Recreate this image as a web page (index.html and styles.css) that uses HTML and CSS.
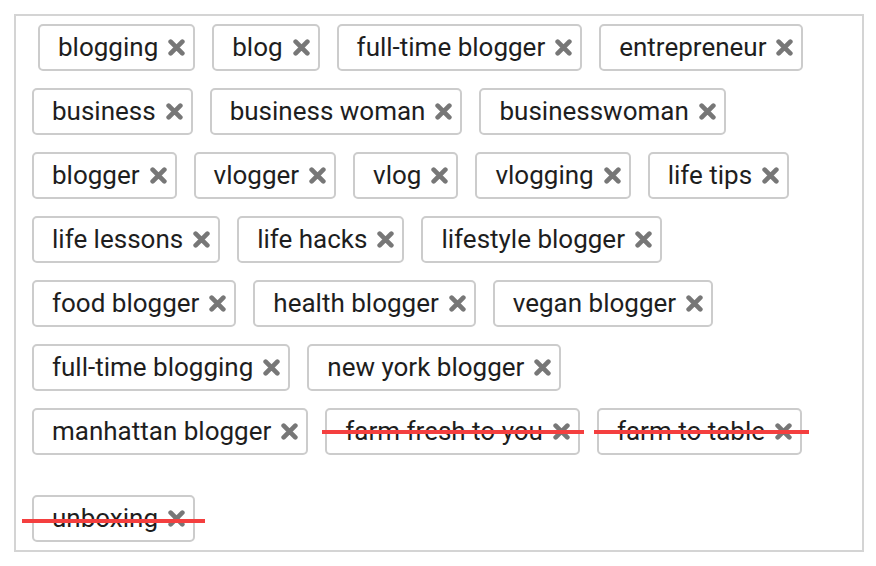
FILE: index.html
```html
<!DOCTYPE html>
<html lang="en">
<head>
<meta charset="utf-8">
<title>Tags</title>
<link rel="stylesheet" href="styles.css">
</head>
<body>
<div class="tag-box">
  <div class="tag-row first">
    <span class="tag"><span class="label">blogging</span><svg class="x" viewBox="0 0 16 16"><path d="M2.5 2.5L13.5 13.5M13.5 2.5L2.5 13.5"/></svg></span>
    <span class="tag"><span class="label">blog</span><svg class="x" viewBox="0 0 16 16"><path d="M2.5 2.5L13.5 13.5M13.5 2.5L2.5 13.5"/></svg></span>
    <span class="tag"><span class="label">full-time blogger</span><svg class="x" viewBox="0 0 16 16"><path d="M2.5 2.5L13.5 13.5M13.5 2.5L2.5 13.5"/></svg></span>
    <span class="tag"><span class="label">entrepreneur</span><svg class="x" viewBox="0 0 16 16"><path d="M2.5 2.5L13.5 13.5M13.5 2.5L2.5 13.5"/></svg></span>
  </div>
  <div class="tag-row">
    <span class="tag"><span class="label">business</span><svg class="x" viewBox="0 0 16 16"><path d="M2.5 2.5L13.5 13.5M13.5 2.5L2.5 13.5"/></svg></span>
    <span class="tag"><span class="label">business woman</span><svg class="x" viewBox="0 0 16 16"><path d="M2.5 2.5L13.5 13.5M13.5 2.5L2.5 13.5"/></svg></span>
    <span class="tag"><span class="label">businesswoman</span><svg class="x" viewBox="0 0 16 16"><path d="M2.5 2.5L13.5 13.5M13.5 2.5L2.5 13.5"/></svg></span>
  </div>
  <div class="tag-row">
    <span class="tag"><span class="label">blogger</span><svg class="x" viewBox="0 0 16 16"><path d="M2.5 2.5L13.5 13.5M13.5 2.5L2.5 13.5"/></svg></span>
    <span class="tag"><span class="label">vlogger</span><svg class="x" viewBox="0 0 16 16"><path d="M2.5 2.5L13.5 13.5M13.5 2.5L2.5 13.5"/></svg></span>
    <span class="tag"><span class="label">vlog</span><svg class="x" viewBox="0 0 16 16"><path d="M2.5 2.5L13.5 13.5M13.5 2.5L2.5 13.5"/></svg></span>
    <span class="tag"><span class="label">vlogging</span><svg class="x" viewBox="0 0 16 16"><path d="M2.5 2.5L13.5 13.5M13.5 2.5L2.5 13.5"/></svg></span>
    <span class="tag"><span class="label">life tips</span><svg class="x" viewBox="0 0 16 16"><path d="M2.5 2.5L13.5 13.5M13.5 2.5L2.5 13.5"/></svg></span>
  </div>
  <div class="tag-row">
    <span class="tag"><span class="label">life lessons</span><svg class="x" viewBox="0 0 16 16"><path d="M2.5 2.5L13.5 13.5M13.5 2.5L2.5 13.5"/></svg></span>
    <span class="tag"><span class="label">life hacks</span><svg class="x" viewBox="0 0 16 16"><path d="M2.5 2.5L13.5 13.5M13.5 2.5L2.5 13.5"/></svg></span>
    <span class="tag"><span class="label">lifestyle blogger</span><svg class="x" viewBox="0 0 16 16"><path d="M2.5 2.5L13.5 13.5M13.5 2.5L2.5 13.5"/></svg></span>
  </div>
  <div class="tag-row">
    <span class="tag"><span class="label">food blogger</span><svg class="x" viewBox="0 0 16 16"><path d="M2.5 2.5L13.5 13.5M13.5 2.5L2.5 13.5"/></svg></span>
    <span class="tag"><span class="label">health blogger</span><svg class="x" viewBox="0 0 16 16"><path d="M2.5 2.5L13.5 13.5M13.5 2.5L2.5 13.5"/></svg></span>
    <span class="tag"><span class="label">vegan blogger</span><svg class="x" viewBox="0 0 16 16"><path d="M2.5 2.5L13.5 13.5M13.5 2.5L2.5 13.5"/></svg></span>
  </div>
  <div class="tag-row">
    <span class="tag"><span class="label">full-time blogging</span><svg class="x" viewBox="0 0 16 16"><path d="M2.5 2.5L13.5 13.5M13.5 2.5L2.5 13.5"/></svg></span>
    <span class="tag"><span class="label">new york blogger</span><svg class="x" viewBox="0 0 16 16"><path d="M2.5 2.5L13.5 13.5M13.5 2.5L2.5 13.5"/></svg></span>
  </div>
  <div class="tag-row">
    <span class="tag"><span class="label">manhattan blogger</span><svg class="x" viewBox="0 0 16 16"><path d="M2.5 2.5L13.5 13.5M13.5 2.5L2.5 13.5"/></svg></span>
    <span class="tag struck struck-a"><span class="label">farm fresh to you</span><svg class="x" viewBox="0 0 16 16"><path d="M2.5 2.5L13.5 13.5M13.5 2.5L2.5 13.5"/></svg></span>
    <span class="tag struck struck-b"><span class="label">farm to table</span><svg class="x" viewBox="0 0 16 16"><path d="M2.5 2.5L13.5 13.5M13.5 2.5L2.5 13.5"/></svg></span>
  </div>
  <div class="tag-row last">
    <span class="tag struck struck-c"><span class="label">unboxing</span><svg class="x" viewBox="0 0 16 16"><path d="M2.5 2.5L13.5 13.5M13.5 2.5L2.5 13.5"/></svg></span>
  </div>
</div>
</body>
</html>
```

FILE: styles.css
```css
html, body {
  margin: 0;
  padding: 0;
  background: #ffffff;
}

body {
  font-family: Roboto, "Liberation Sans", Arial, sans-serif;
}

.tag-box {
  box-sizing: border-box;
  width: 850px;
  height: 538px;
  margin: 14px 12px 14px 14px;
  border: 2px solid #d4d4d4;
  padding: 8px 16px 8px 16px;
  display: flex;
  flex-direction: column;
  gap: 17px;
}

.tag-row {
  display: flex;
  gap: 17px;
}

.tag-row.first {
  margin-left: 6px;
}

.tag-row.last {
  margin-top: 23px;
}

.tag {
  position: relative;
  box-sizing: border-box;
  height: 47px;
  display: inline-flex;
  align-items: center;
  border: 2px solid #cccccc;
  border-radius: 5px;
  padding: 0 8px 0 18px;
  background: #fff;
}

.label {
  font-size: 26px;
  color: #1e1e1e;
  white-space: nowrap;
  line-height: 30px;
  padding-bottom: 2px;
}

.x {
  width: 17px;
  height: 17px;
  margin-left: 10px;
  flex: none;
}

.x path {
  fill: none;
  stroke: #777777;
  stroke-width: 4.4;
  stroke-linecap: round;
}

.struck::after {
  content: "";
  position: absolute;
  top: 50%;
  height: 4px;
  margin-top: -2px;
  background: #f43f3f;
}

.struck-a::after {
  left: -5px;
  right: -6px;
}

.struck-b::after {
  left: -5px;
  right: -9px;
}

.struck-c::after {
  left: -12px;
  right: -12px;
  margin-top: 0;
}
```
